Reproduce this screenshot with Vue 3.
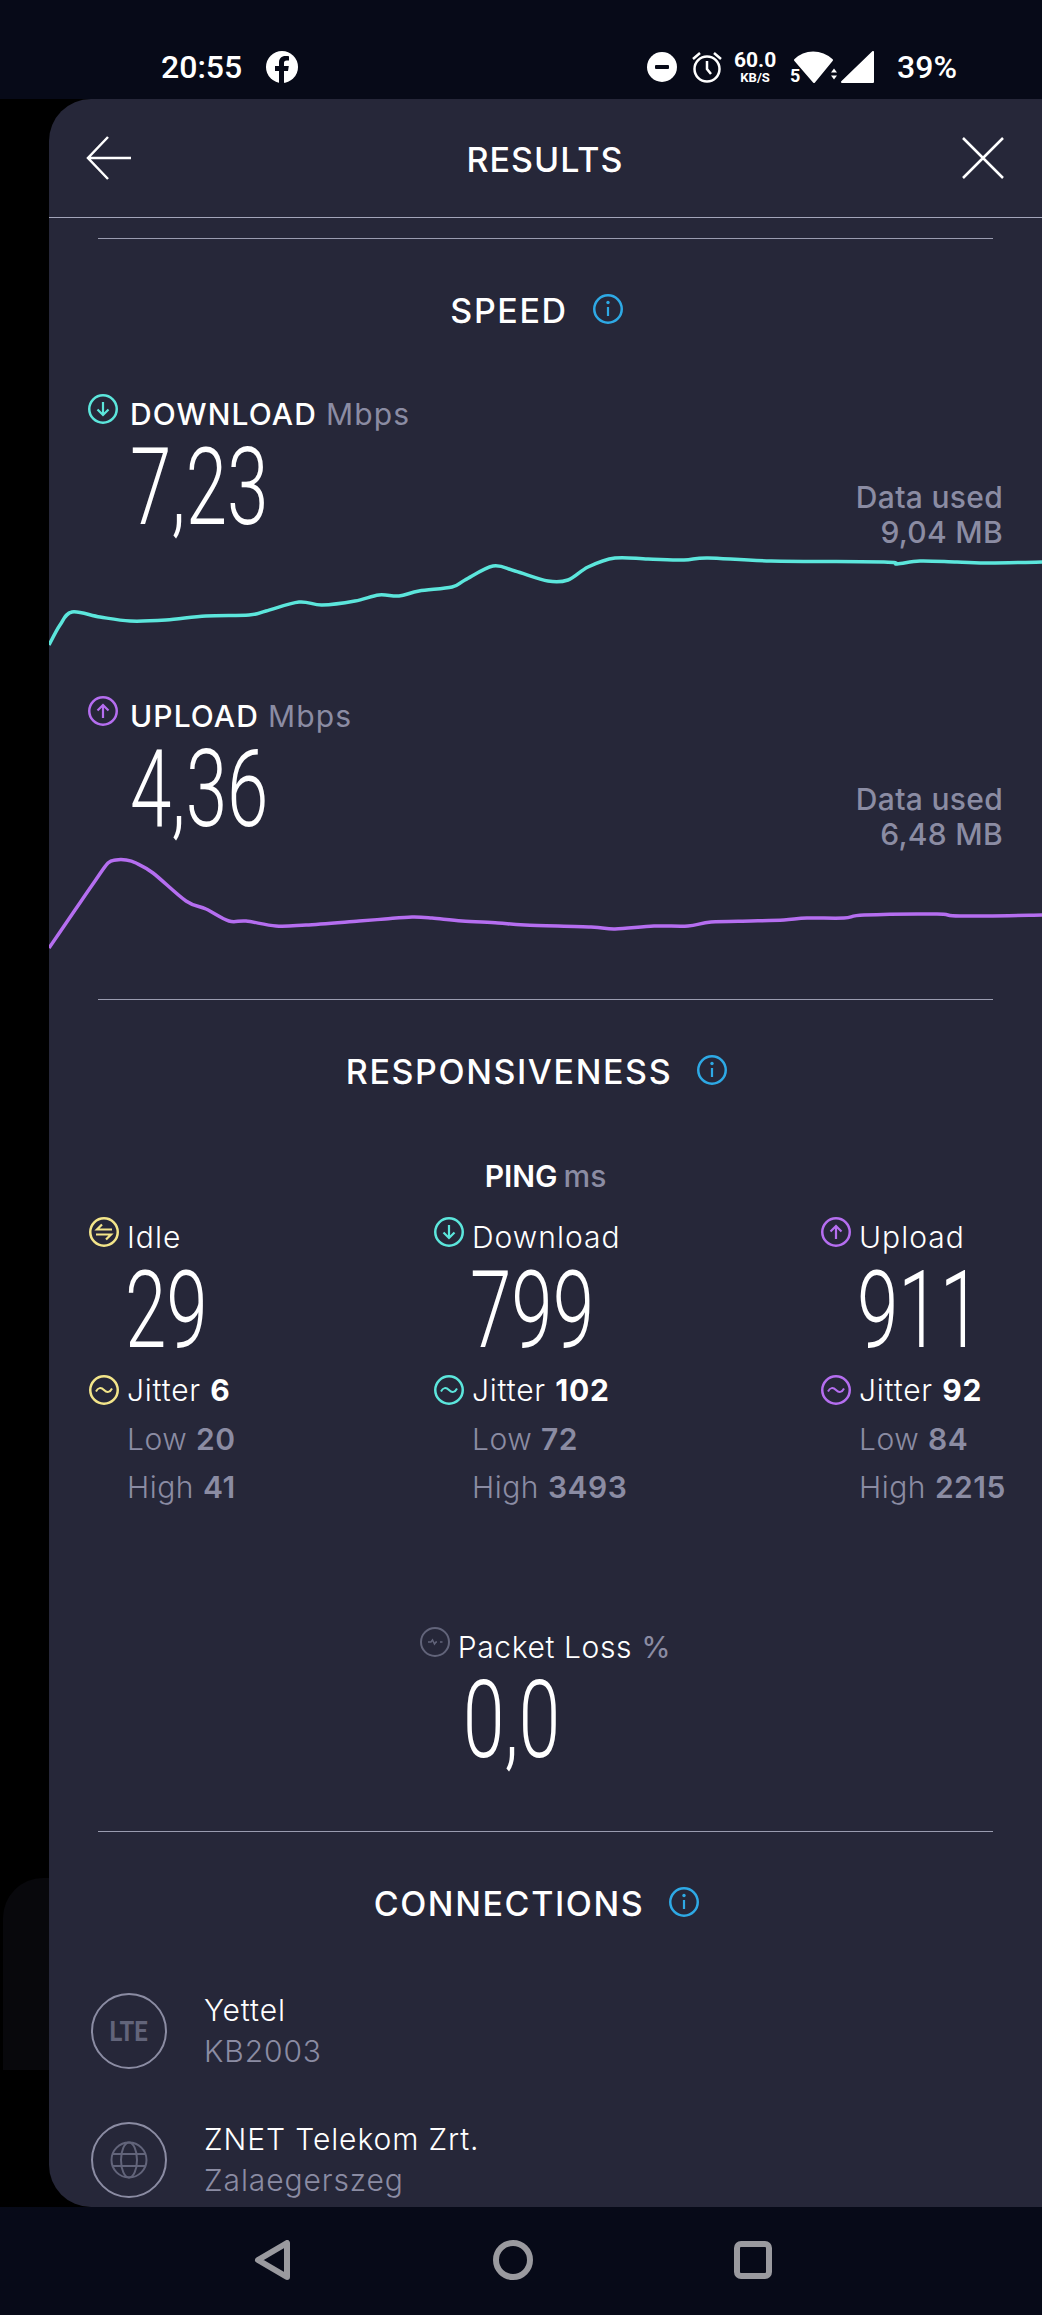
<script setup>
// chart points are in page pixels, the svg viewBox uses the same numbers
const downloadPoints = [
  [49, 646], [60, 626], [72, 613], [100, 618], [130, 622], [166, 621], [206, 617], [249, 616],
  [266, 612], [299, 603], [322, 606], [355, 602], [379, 596], [399, 597], [419, 592], [452, 588],
  [465, 581], [493, 567], [515, 572], [548, 582], [568, 581], [588, 568], [615, 559], [648, 560],
  [684, 561], [708, 559], [771, 562], [884, 563], [897, 565], [920, 562], [957, 563], [990, 564],
  [1042, 563],
]
const uploadPoints = [
  [49, 949], [75, 911], [95, 882], [108, 864], [116, 861], [126, 861], [136, 864], [153, 874],
  [186, 902], [206, 910], [229, 922], [246, 922], [276, 927], [306, 926], [359, 922], [385, 920],
  [412, 918], [432, 919], [462, 922], [498, 924], [525, 926], [591, 928], [615, 930], [654, 927],
  [688, 927], [711, 923], [751, 922], [784, 921], [807, 919], [844, 919], [864, 916], [937, 915],
  [960, 917], [1042, 916],
]

// smooth line through the points
function smoothPath(points) {
  let d = `M${points[0][0]} ${points[0][1]}`
  for (let i = 0; i < points.length - 1; i++) {
    const p0 = points[i - 1] || points[i]
    const p1 = points[i]
    const p2 = points[i + 1]
    const p3 = points[i + 2] || p2
    const c1x = p1[0] + (p2[0] - p0[0]) / 6
    const c1y = p1[1] + (p2[1] - p0[1]) / 6
    const c2x = p2[0] - (p3[0] - p1[0]) / 6
    const c2y = p2[1] - (p3[1] - p1[1]) / 6
    d += ` C${c1x.toFixed(1)} ${c1y.toFixed(1)} ${c2x.toFixed(1)} ${c2y.toFixed(1)} ${p2[0]} ${p2[1]}`
  }
  return d
}

const speeds = [
  { label: 'DOWNLOAD', value: '7,23', used: '9,04 MB', icon: '#i-down', tone: 'cyan', box: '49 550 993 100', path: smoothPath(downloadPoints) },
  { label: 'UPLOAD', value: '4,36', used: '6,48 MB', icon: '#i-up', tone: 'purple', box: '49 852 993 100', path: smoothPath(uploadPoints) },
]

const pings = [
  { label: 'Idle', value: '29', jitter: 6, low: 20, high: 41, icon: '#i-idle', tone: 'yellow' },
  { label: 'Download', value: '799', jitter: 102, low: 72, high: 3493, icon: '#i-down', tone: 'cyan' },
  { label: 'Upload', value: '911', jitter: 92, low: 84, high: 2215, icon: '#i-up', tone: 'purple' },
]
</script>

<template>
  <div class="phone">
    <svg class="defs" width="0" height="0">
      <symbol id="i-down" viewBox="0 0 30 30">
        <circle cx="15" cy="15" r="13.750" fill="none" stroke="currentColor" stroke-width="2.500" />
        <path d="M15 8v13M9.500 15.500 15 21l5.500-5.500" fill="none" stroke="currentColor" stroke-width="2.200" />
      </symbol>
      <symbol id="i-up" viewBox="0 0 30 30">
        <circle cx="15" cy="15" r="13.750" fill="none" stroke="currentColor" stroke-width="2.500" />
        <path d="M15 22V9M9.500 14.500 15 9l5.500 5.500" fill="none" stroke="currentColor" stroke-width="2.200" />
      </symbol>
      <symbol id="i-idle" viewBox="0 0 30 30">
        <circle cx="15" cy="15" r="13.750" fill="none" stroke="currentColor" stroke-width="2.500" />
        <path d="M23 12.500H8l5-5M7 17.500h15l-5 5" fill="none" stroke="currentColor" stroke-width="2.200" />
      </symbol>
      <symbol id="i-jitter" viewBox="0 0 30 30">
        <circle cx="15" cy="15" r="13.750" fill="none" stroke="currentColor" stroke-width="2.500" />
        <path d="M7 16.500c2-4 5-4.500 8-1.500s6 2.500 8-1.500" fill="none" stroke="currentColor" stroke-width="2" />
      </symbol>
      <symbol id="i-info" viewBox="0 0 30 30">
        <circle cx="15" cy="15" r="13.750" fill="none" stroke="currentColor" stroke-width="2.500" />
        <path d="M15 13v9" fill="none" stroke="currentColor" stroke-width="2.200" />
        <circle cx="15" cy="8.500" r="1.700" fill="currentColor" />
      </symbol>
    </svg>

    <!-- status bar -->
    <header class="status">
      <span class="time">20:55</span>
      <svg class="fb" width="32" height="32" viewBox="0 0 32 32">
        <circle cx="16" cy="16" r="16" fill="#fff" />
        <path d="M18 32V20h4l.8-5H18v-3c0-1.500.7-2.600 2.800-2.600H23V5.200C22 5 20.700 4.900 19.500 4.900c-4 0-6.500 2.400-6.500 6.600V15H9v5h4v12z" fill="#070a18" />
      </svg>
      <div class="status-right">
        <svg width="30" height="30" viewBox="0 0 30 30">
          <circle cx="15" cy="15" r="15" fill="#fff" />
          <rect x="8" y="13" width="14" height="4" rx="1" fill="#070a18" />
        </svg>
        <svg class="alarm" width="34" height="34" viewBox="0 0 34 34">
          <circle cx="17" cy="19" r="12.500" fill="none" stroke="#fff" stroke-width="2.500" />
          <path d="M17 11v8l4 5M3 9l7-6M31 9l-7-6" fill="none" stroke="#fff" stroke-width="2.500" />
        </svg>
        <div class="rate">
          <span class="rate-num">60.0</span>
          <span class="rate-unit">KB/S</span>
        </div>
        <div class="wifi">
          <svg width="48" height="34" viewBox="0 0 48 34">
            <path d="M3 10C13 0 29 0 40 10L22 32Z" fill="#fff" stroke="#fff" stroke-linejoin="round" stroke-width="2" />
            <path d="M39 22.500l3-4 3 4zM39 25.500h6l-3 4z" fill="#fff" />
          </svg>
          <span class="wifi-num">5</span>
        </div>
        <svg class="signal" width="33" height="32" viewBox="0 0 33 32">
          <path d="M1 31 32 1v30z" fill="#fff" stroke="#fff" stroke-linejoin="round" stroke-width="2" />
        </svg>
        <span class="battery">39%</span>
      </div>
    </header>

    <div class="middle">
      <aside class="gutter">
        <div class="ghost-card"></div>
      </aside>

      <main class="sheet">
        <div class="top-bar">
          <svg width="46" height="44" viewBox="0 0 46 44">
            <path d="M45 22H3M22 1 2 22l20 21" fill="none" stroke="#fff" stroke-width="2.500" />
          </svg>
          <h1 class="top-title">RESULTS</h1>
          <svg width="42" height="42" viewBox="0 0 42 42">
            <path d="M1 1 41 41M41 1 1 41" fill="none" stroke="#fff" stroke-width="2.500" />
          </svg>
        </div>

        <div class="rule rule-first"></div>
        <div class="section-title">
          <h2>SPEED</h2>
          <svg class="ico info"><use href="#i-info" /></svg>
        </div>

        <section v-for="speed in speeds" :key="speed.label" class="speed">
          <div class="speed-top">
            <div>
              <div class="head">
                <svg class="ico" :class="speed.tone"><use :href="speed.icon" /></svg>
                <span class="speed-label">{{ speed.label }} <span class="unit">Mbps</span></span>
              </div>
              <div class="big-num speed-num">{{ speed.value }}</div>
            </div>
            <div class="used">Data used<br />{{ speed.used }}</div>
          </div>
          <svg class="chart" :class="speed.tone" width="993" height="100" :viewBox="speed.box">
            <path :d="speed.path" fill="none" stroke="currentColor" stroke-width="3.500" />
          </svg>
        </section>

        <div class="rule rule-mid"></div>
        <div class="section-title">
          <h2>RESPONSIVENESS</h2>
          <svg class="ico info"><use href="#i-info" /></svg>
        </div>

        <div class="ping-title">PING<span class="unit">ms</span></div>

        <div class="ping-grid">
          <div v-for="ping in pings" :key="ping.label">
            <div class="head">
              <svg class="ico" :class="ping.tone"><use :href="ping.icon" /></svg>
              <span class="ping-label">{{ ping.label }}</span>
            </div>
            <div class="big-num ping-num">{{ ping.value }}</div>
            <div class="jitter">
              <svg class="ico" :class="ping.tone"><use href="#i-jitter" /></svg>
              <span>Jitter <b>{{ ping.jitter }}</b></span>
            </div>
            <div class="stat stat-first">Low <b>{{ ping.low }}</b></div>
            <div class="stat">High <b>{{ ping.high }}</b></div>
          </div>
        </div>

        <div class="packet">
          <div class="head">
            <svg class="ico gray" viewBox="0 0 30 30">
              <circle cx="15" cy="15" r="14" fill="none" stroke="currentColor" stroke-width="2" />
              <path d="M8 15h3l1.500-2 2 4 1.500-2h1M20 15h2.500" fill="none" stroke="currentColor" stroke-width="1.500" />
            </svg>
            <span class="ping-label packet-label">Packet Loss <span class="unit">%</span></span>
          </div>
          <div class="big-num packet-num">0,0</div>
        </div>

        <div class="rule rule-last"></div>
        <div class="section-title">
          <h2>CONNECTIONS</h2>
          <svg class="ico info"><use href="#i-info" /></svg>
        </div>

        <div class="conn conn-first">
          <div class="conn-icon"><span class="lte">LTE</span></div>
          <div class="conn-text">
            <div>Yettel</div>
            <div class="conn-sub">KB2003</div>
          </div>
        </div>
        <div class="conn conn-second">
          <div class="conn-icon">
            <svg width="38" height="38" viewBox="0 0 38 38" fill="none" stroke="#62647a" stroke-width="2">
              <circle cx="19" cy="19" r="17.500" />
              <ellipse cx="19" cy="19" rx="8" ry="17.500" />
              <path d="M2 13h34M2 25h34" />
            </svg>
          </div>
          <div class="conn-text">
            <div>ZNET Telekom Zrt.</div>
            <div class="conn-sub">Zalaegerszeg</div>
          </div>
        </div>
      </main>
    </div>

    <!-- android nav bar -->
    <footer class="nav">
      <svg width="38" height="40" viewBox="0 0 38 40">
        <path d="M33 3v34L4 20z" fill="none" stroke="#9a9a9f" stroke-width="6" stroke-linejoin="round" />
      </svg>
      <svg width="40" height="40" viewBox="0 0 40 40">
        <circle cx="20" cy="20" r="17" fill="none" stroke="#9a9a9f" stroke-width="6" />
      </svg>
      <svg width="38" height="38" viewBox="0 0 38 38">
        <rect x="3" y="3" width="32" height="32" rx="4" fill="none" stroke="#9a9a9f" stroke-width="6" />
      </svg>
    </footer>
  </div>
</template>

<style scoped>
.phone {
  width: 1042px;
  height: 2315px;
  display: flex;
  flex-direction: column;
  background: #070a18;
  color: #ffffff;
  font-family: Inter, "Liberation Sans", sans-serif;
  overflow: hidden;
}

.defs {
  position: absolute;
}

.status {
  height: 99px;
  flex-shrink: 0;
  box-sizing: border-box;
  display: flex;
  align-items: center;
  padding: 35px 85px 0 161px;
  font-family: Roboto, sans-serif;
}

.time {
  font-size: 32px;
  font-weight: 500;
}

.fb {
  margin-left: 24px;
}

.status-right {
  margin-left: auto;
  display: flex;
  align-items: center;
}

.alarm {
  margin-left: 13px;
}

.rate {
  display: flex;
  flex-direction: column;
  align-items: center;
  margin-left: 10px;
  width: 42px;
  font-weight: 700;
  line-height: 1;
}

.rate-num {
  font-size: 21px;
}

.rate-unit {
  font-size: 13px;
}

.wifi {
  position: relative;
  margin-left: 16px;
  height: 34px;
}

.wifi-num {
  position: absolute;
  left: -2px;
  bottom: -1px;
  font-size: 18px;
  font-weight: 700;
  line-height: 1;
}

.signal {
  margin-left: 1px;
}

.battery {
  margin-left: 23px;
  font-size: 32px;
  font-weight: 500;
}

.middle {
  height: 2108px;
  flex-shrink: 0;
  display: flex;
  background: #000000;
}

.gutter {
  width: 49px;
  flex-shrink: 0;
}

.ghost-card {
  margin-top: 1779px;
  margin-left: 3px;
  height: 192px;
  background: #08080c;
  border-top-left-radius: 40px;
}

.sheet {
  flex: 1;
  min-width: 0;
  background: #262739;
  border-radius: 42px 0 0 42px;
  overflow: hidden;
}

.top-bar {
  height: 118px;
  border-bottom: 1px solid #a3a5ba;
  display: flex;
  align-items: center;
  justify-content: space-between;
  padding: 0 38px 0 37px;
}

.top-title {
  margin: 2px 4px 0 0;
  font-size: 34px;
  font-weight: 500;
  letter-spacing: 1px;
}

.rule {
  height: 1px;
  margin: 0 49px;
  background: #9a9cb0;
}

.rule-first {
  margin-top: 20px;
}

.rule-mid {
  margin-top: 48px;
}

.rule-last {
  margin-top: 53px;
}

.section-title {
  height: 40px;
  margin-top: 50px;
  padding-right: 18px;
  display: flex;
  align-items: center;
  justify-content: center;
  gap: 25px;
}

.section-title h2 {
  margin: 2px 0 0;
  font-size: 34px;
  font-weight: 500;
  letter-spacing: 1.6px;
}

.ico {
  width: 30px;
  height: 30px;
  flex-shrink: 0;
}

.info {
  color: #2ea9e5;
}

.cyan {
  color: #5ce6dc;
}

.purple {
  color: #b56ef0;
}

.yellow {
  color: #f3e58a;
}

.gray {
  color: #62647a;
}

.unit {
  color: #8b8ca3;
  font-weight: 400;
}

.speed {
  padding-left: 39px;
  margin-top: 60px;
}

.speed + .speed {
  margin-top: 42px;
}

.speed-top {
  display: flex;
  justify-content: space-between;
  height: 156px;
  padding-right: 39px;
}

.head {
  height: 40px;
  display: flex;
  align-items: center;
  gap: 12px;
}

.speed-label {
  padding-top: 9px;
  font-size: 30px;
  font-weight: 500;
  letter-spacing: 1.1px;
}

.big-num {
  height: 116px;
  line-height: 116px;
  font-family: Roboto, sans-serif;
  font-size: 108px;
  font-weight: 300;
  transform: scaleX(0.69);
  transform-origin: left center;
  white-space: nowrap;
}

.speed-num {
  margin-left: 42px;
}

.used {
  align-self: flex-end;
  margin-bottom: -5px;
  text-align: right;
  font-size: 30px;
  font-weight: 500;
  line-height: 35px;
  letter-spacing: 0.3px;
  color: #8b8ca3;
}

.chart {
  display: block;
  margin: 4px 0 0 -39px;
}

.ping-title {
  height: 40px;
  margin-top: 65px;
  text-align: center;
  font-size: 30px;
  font-weight: 600;
  line-height: 42px;
}

.ping-title .unit {
  margin-left: 6px;
  font-weight: 500;
}

.ping-grid {
  display: grid;
  grid-template-columns: 345px 387px 1fr;
  margin-top: 17px;
  padding-left: 40px;
}

.ping-grid .head,
.packet .head {
  gap: 8px;
}

.ping-label {
  padding-top: 9px;
  font-size: 30px;
  font-weight: 300;
  letter-spacing: 1px;
}

.packet-label {
  letter-spacing: 0.6px;
}

.ping-num {
  margin-left: 36px;
}

.packet-num {
  margin-left: 43px;
}

.jitter {
  height: 40px;
  margin-top: 2px;
  display: flex;
  align-items: center;
  gap: 8px;
  font-size: 30px;
  font-weight: 300;
  letter-spacing: 0.8px;
}

.stat {
  height: 48px;
  line-height: 48px;
  padding-left: 38px;
  font-size: 30px;
  font-weight: 300;
  letter-spacing: 0.5px;
  color: #8b8ca3;
}

.stat b {
  font-weight: 600;
}

.stat-first {
  margin-top: 5px;
}

b {
  font-weight: 700;
}

.packet {
  width: fit-content;
  margin: 111px auto 0;
}

.conn {
  display: flex;
  align-items: center;
  gap: 37px;
  padding-left: 42px;
}

.conn-first {
  margin-top: 68px;
}

.conn-second {
  margin-top: 47px;
}

.conn-icon {
  width: 76px;
  height: 76px;
  flex-shrink: 0;
  display: flex;
  align-items: center;
  justify-content: center;
  border: 2px solid #8b8ca3;
  border-radius: 50%;
  box-sizing: border-box;
}

.lte {
  font-family: Roboto, sans-serif;
  font-size: 28px;
  font-weight: 700;
  color: #62647a;
  transform: scaleX(0.85);
}

.conn-text {
  font-size: 30px;
  font-weight: 300;
  line-height: 41px;
  letter-spacing: 0.9px;
}

.conn-sub {
  color: #8b8ca3;
}

.nav {
  height: 108px;
  flex-shrink: 0;
  display: flex;
  align-items: center;
  justify-content: center;
  gap: 201px;
  padding: 0 17px 2px 0;
  box-sizing: border-box;
}
</style>
